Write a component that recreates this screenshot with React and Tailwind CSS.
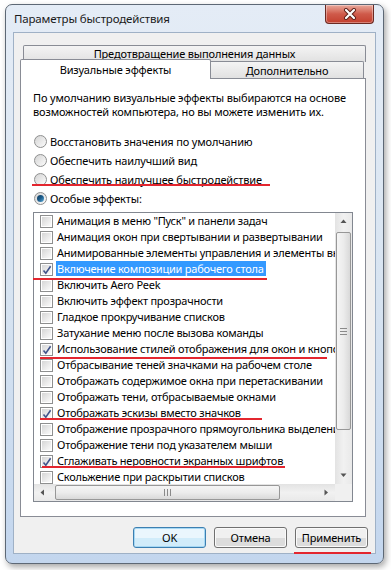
import React from 'react';

const items = [
  { text: 'Анимация в меню "Пуск" и панели задач' },
  { text: 'Анимация окон при свертывании и развертывании' },
  { text: 'Анимированные элементы управления и элементы внутри окна' },
  { text: 'Включение композиции рабочего стола', checked: true, selected: true, mark: { top: 17, left: -1, width: 234 } },
  { text: 'Включить Aero Peek' },
  { text: 'Включить эффект прозрачности' },
  { text: 'Гладкое прокручивание списков' },
  { text: 'Затухание меню после вызова команды' },
  { text: 'Использование стилей отображения для окон и кнопок', checked: true, mark: { top: 16, left: 6, width: 287 } },
  { text: 'Отбрасывание теней значками на рабочем столе' },
  { text: 'Отображать содержимое окна при перетаскивании' },
  { text: 'Отображать тени, отбрасываемые окнами' },
  { text: 'Отображать эскизы вместо значков', checked: true, mark: { top: 13, left: 6, width: 222 } },
  { text: 'Отображение прозрачного прямоугольника выделения' },
  { text: 'Отображение тени под указателем мыши' },
  { text: 'Сглаживать неровности экранных шрифтов', checked: true, mark: { top: 13, left: 8, width: 243 } },
  { text: 'Скольжение при раскрытии списков' },
];

const radios = [
  { text: 'Восстановить значения по умолчанию' },
  { text: 'Обеспечить наилучший вид' },
  { text: 'Обеспечить наилучшее быстродействие', mark: true },
  { text: 'Особые эффекты:', on: true },
];

function CheckBox({ checked }) {
  return (
    <span className="relative w-[13px] h-[13px] shrink-0 border border-[#8e8f8f] bg-white p-[1px]">
      <span className="block w-full h-full bg-gradient-to-br from-[#d6d6d6] to-[#fbfbfb]" />
      {checked && (
        <svg className="absolute left-[1px] top-[1px]" width="10" height="10" viewBox="0 0 10 10">
          <path d="M1.5 5.5 L3.8 8.2 L8.6 1.2" fill="none" stroke="#41548a" strokeWidth="1.6" />
        </svg>
      )}
    </span>
  );
}

function Radio({ on }) {
  return (
    <span className="relative flex items-center justify-center w-[13px] h-[13px] shrink-0 rounded-full border border-[#8e8f8f] bg-gradient-to-br from-[#d4d4d4] to-[#fcfcfc]">
      {on && <span className="w-[7px] h-[7px] rounded-full bg-gradient-to-br from-[#0f3a5c] via-[#1d5d8c] to-[#5fb0dc]" />}
    </span>
  );
}

function Arrow({ dir }) {
  if (dir === 'left' || dir === 'right') {
    const p = dir === 'left' ? 'M4 0.5 L0.5 3.5 L4 6.5 Z' : 'M0.5 0.5 L4 3.5 L0.5 6.5 Z';
    return (
      <svg width="5" height="7" viewBox="0 0 5 7">
        <path d={p} fill="#555" />
      </svg>
    );
  }
  const d = dir === 'up' ? 'M0.5 4 L3.5 0.5 L6.5 4 Z' : 'M0.5 0.5 L3.5 4 L6.5 0.5 Z';
  return (
    <svg width="7" height="5" viewBox="0 0 7 5">
      <path d={d} fill="#555" />
    </svg>
  );
}

function Button({ children, primary, mark }) {
  return (
    <div
      className={
        'relative w-[73px] h-[21px] rounded-[3px] border flex items-center justify-center ' +
        (primary ? 'border-[#3c7fb1] shadow-[inset_0_0_0_1px_#a6d8f4]' : 'border-[#707070] shadow-[inset_0_0_0_1px_#fafafa]')
      }
    >
      <div className="absolute inset-[1px] rounded-[2px] overflow-hidden flex flex-col">
        <div className={'h-1/2 ' + (primary ? 'bg-[#eaf6fd]' : 'bg-[#f0f0f0]')} />
        <div className={'h-1/2 ' + (primary ? 'bg-[#d1ecfa]' : 'bg-[#dcdcdc]')} />
      </div>
      <span className="relative leading-[14px] text-black">{children}</span>
      {mark && <div className="absolute left-[-2px] top-[24px] w-[77px] h-[2px] bg-[#e3262f]" />}
    </div>
  );
}

export default function App() {
  return (
    <div className="w-[391px] h-[570px] bg-white overflow-hidden pt-[4px] pl-[5px] font-['Noto_Sans','Open_Sans',sans-serif] text-[11px] tracking-[-0.15px] text-black">
      <div className="w-[379px] h-[560px] rounded-[7px] border border-[#5d6875] bg-gradient-to-b from-[#e4ecf6] via-[#d8e4f1] to-[#c3d6ee] shadow-[2px_3px_6px_rgba(0,0,0,0.35)] flex flex-col">
        {/* title bar */}
        <div className="h-[27px] flex items-start justify-between">
          <div className="pl-[8px] pt-[6px] text-[11.5px] leading-[16px] text-[#1a1a1a]">Параметры быстродействия</div>
          <div className="mr-[9px] w-[49px] h-[19px] rounded-b-[4px] border border-t-0 border-[#6b2a23] bg-gradient-to-b from-[#e8a89b] via-[#cf5a4a] to-[#c33f2e] flex items-center justify-center shadow-[inset_0_0_0_1px_rgba(255,255,255,0.35)]">
            <svg width="14" height="12" viewBox="0 0 14 12">
              <path d="M3 2 L11 10 M11 2 L3 10" stroke="#5b1e17" strokeWidth="4" strokeLinecap="round" />
              <path d="M3 2 L11 10 M11 2 L3 10" stroke="#ffffff" strokeWidth="2.2" strokeLinecap="round" />
            </svg>
          </div>
        </div>

        {/* client area */}
        <div className="mx-[7px] h-[522px] border border-[#9fb1c6] bg-[#f0f0f0] flex flex-col">
          <div className="pt-[12px] pl-[6px]">
            <div className="ml-[3px] w-[343px] h-[17px] border border-b-0 border-[#898c95] rounded-t-[2px] bg-gradient-to-b from-[#f4f4f4] to-[#e1e1e1] flex items-center justify-center leading-[14px]">
              Предотвращение выполнения данных
            </div>
            <div className="flex items-end h-[16px]">
              <div className="relative z-10 w-[191px] h-[20px] -mb-[1px] border border-b-0 border-[#898c95] rounded-t-[2px] bg-white flex items-center justify-center leading-[14px]">
                Визуальные эффекты
              </div>
              <div className="w-[153px] h-[17px] border border-b-0 border-l-0 border-[#898c95] rounded-tr-[2px] bg-gradient-to-b from-[#f4f4f4] to-[#e1e1e1] flex items-center justify-center leading-[14px] pt-[2px]">
                Дополнительно
              </div>
            </div>

            {/* tab panel */}
            <div className="w-[346px] h-[439px] border border-[#898c95] bg-white pt-[12px] pl-[12px]">
              <div className="leading-[14px] whitespace-nowrap">
                По умолчанию визуальные эффекты выбираются на основе
                <br />
                возможностей компьютера, но вы можете изменить их.
              </div>

              <div className="mt-[13px] flex flex-col">
                {radios.map((r) => (
                  <div key={r.text} className="relative h-[19px] flex items-center gap-[3px] pl-[1px] leading-[14px]">
                    <Radio on={r.on} />
                    <span>{r.text}</span>
                    {r.mark && <div className="absolute left-[-1px] top-[14px] w-[238px] h-[2px] bg-[#e3262f]" />}
                  </div>
                ))}
              </div>

              {/* list box */}
              <div className="mt-[4px] w-[320px] h-[290px] border border-[#828790] flex flex-col">
                <div className="flex h-[271px]">
                  <div className="flex-1 min-w-0 flex flex-col tracking-[-0.22px]">
                    {items.map((it) => (
                      <div key={it.text} className="relative h-[16px] shrink-0 flex items-center gap-[3px] pl-[6px] whitespace-nowrap">
                        <CheckBox checked={it.checked} />
                        <span className="overflow-hidden">
                          <span className={'inline-block leading-[15px] pl-[1px] pr-[2px] ' + (it.selected ? 'bg-[#3399ff] text-white' : '')}>
                            {it.text}
                          </span>
                        </span>
                        {it.mark && (
                          <div
                            className="absolute h-[2px] bg-[#e3262f] z-10"
                            style={{ top: it.mark.top, left: it.mark.left, width: it.mark.width }}
                          />
                        )}
                      </div>
                    ))}
                  </div>
                  {/* vertical scrollbar */}
                  <div className="w-[17px] shrink-0 bg-gradient-to-r from-[#e3e3e3] via-[#f1f1f1] to-[#e9e9e9] flex flex-col items-center">
                    <div className="h-[17px] w-full flex items-center justify-center">
                      <Arrow dir="up" />
                    </div>
                    <div className="mt-[2px] h-[198px] w-[15px] rounded-[2px] border border-[#979797] bg-gradient-to-r from-[#f5f5f5] via-[#ececec] to-[#d9d9d9] flex flex-col items-center justify-center gap-[2px]">
                      <div className="w-[7px] h-[1px] bg-[#8a8a8a]" />
                      <div className="w-[7px] h-[1px] bg-[#8a8a8a]" />
                      <div className="w-[7px] h-[1px] bg-[#8a8a8a]" />
                    </div>
                    <div className="flex-1" />
                    <div className="h-[17px] w-full flex items-center justify-center">
                      <Arrow dir="down" />
                    </div>
                  </div>
                </div>
                {/* horizontal scrollbar */}
                <div className="flex h-[17px]">
                  <div className="flex-1 flex items-center bg-gradient-to-b from-[#e3e3e3] via-[#f1f1f1] to-[#e9e9e9]">
                    <div className="w-[17px] h-full flex items-center justify-center">
                      <Arrow dir="left" />
                    </div>
                    <div className="ml-[4px] w-[225px] h-[15px] rounded-[2px] border border-[#979797] bg-gradient-to-b from-[#f5f5f5] via-[#ececec] to-[#d9d9d9] flex items-center justify-center gap-[2px]">
                      <div className="w-[1px] h-[7px] bg-[#8a8a8a]" />
                      <div className="w-[1px] h-[7px] bg-[#8a8a8a]" />
                      <div className="w-[1px] h-[7px] bg-[#8a8a8a]" />
                    </div>
                    <div className="flex-1" />
                    <div className="w-[17px] h-full flex items-center justify-center">
                      <Arrow dir="right" />
                    </div>
                  </div>
                  <div className="w-[17px] bg-[#f0f0f0]" />
                </div>
              </div>
            </div>
          </div>

          {/* buttons */}
          <div className="mt-[10px] pr-[7px] flex justify-end gap-[8px]">
            <Button primary>OK</Button>
            <Button>Отмена</Button>
            <Button mark>Применить</Button>
          </div>
        </div>
      </div>
    </div>
  );
}
